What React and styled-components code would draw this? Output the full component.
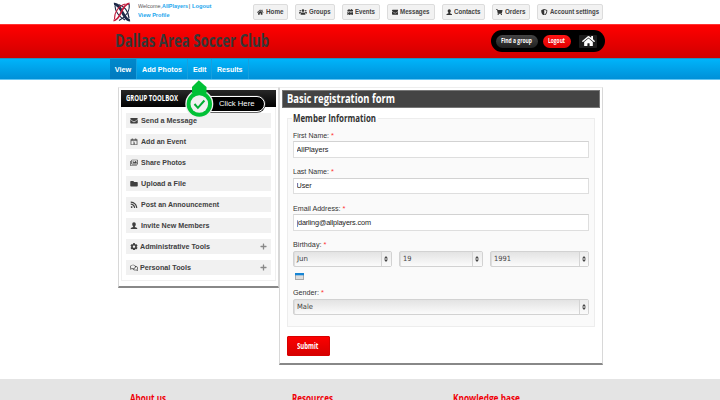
import React, { useLayoutEffect, useRef, useState } from "react";
import styled, { createGlobalStyle, css } from "styled-components";
import {
  FaHome, FaUsers, FaCalendarAlt, FaEnvelope, FaShoppingCart, FaShieldAlt,
  FaRegImages, FaFolder, FaRss, FaCog, FaRegComments, FaPlus,
} from "react-icons/fa";

const sans = '"Liberation Sans", Arial, sans-serif';
const narrow = '"Open Sans", "Noto Sans", sans-serif';

const GlobalStyle = createGlobalStyle`
  * { box-sizing: border-box; }
  html, body { margin: 0; padding: 0; overflow: hidden; background: #fff; }
  body { font-family: ${sans}; color: #3c3c3c; }
  h1, h2, h3, p { margin: 0; font-weight: inherit; font-size: inherit; }
  a { color: inherit; text-decoration: none; }
`;

/* Text condensed or widened to a set measure */
const Measure = styled.span`
  display: inline-block;
  flex: none;
  width: ${(p) => p.$w}px;
  white-space: nowrap;
  text-align: left;
`;
const Stretch = styled.span`
  display: inline-block;
  transform-origin: 0 50%;
`;
function Fit({ w, children }) {
  const ref = useRef(null);
  const [scale, setScale] = useState(1);
  useLayoutEffect(() => {
    const probe = document.createRange();
    probe.selectNodeContents(ref.current);
    ref.current.style.transform = "none";
    const natural = probe.getBoundingClientRect().width;
    if (natural) setScale(w / natural);
    ref.current.style.transform = `scaleX(${w / natural})`;
  }, [w]);
  return (
    <Measure $w={w}>
      <Stretch ref={ref} style={{ transform: `scaleX(${scale})` }}>{children}</Stretch>
    </Measure>
  );
}

const Page = styled.div`
  width: 720px;
  height: 400px;
  overflow: hidden;
  display: flex;
  flex-direction: column;
`;

const TopBar = styled.header`
  flex: none;
  height: 24px;
  padding: 0 117px 0 112px;
  display: flex;
  align-items: flex-start;
  background: #fff;
`;
const Logo = styled.svg`
  width: 20px;
  height: 20px;
  margin-top: 2px;
  flex: none;
`;
const Greeting = styled.div`
  margin: 1px 0 0 5.5px;
  font-size: 6.2px;
  line-height: 9px;
  color: #555;
  flex: 1;
`;
const GreetingLine = styled.div`
  display: flex;
  height: 9px;
`;
const BlueLink = styled.a`
  color: #1ba6ee;
  font-weight: bold;
`;
const Separator = styled.span`
  width: 4px;
  text-align: center;
`;
const QuickLinks = styled.nav`
  display: flex;
  gap: 7.5px;
  margin-top: 4px;
`;
const QuickLink = styled.a`
  width: ${(p) => p.$w}px;
  height: 16px;
  display: flex;
  align-items: center;
  justify-content: center;
  gap: 2px;
  border: 1px solid #dcdcdc;
  border-radius: 2px;
  background: #f2f2f2;
  color: #444;
  font-size: 6.8px;
  line-height: 8px;
  font-weight: bold;
  svg { width: ${(p) => p.$icon ?? 6.5}px; height: ${(p) => p.$icon ?? 6.5}px; flex: none; color: #333; }
`;

const Banner = styled.div`
  flex: none;
  height: 34px;
  padding: 0 115px;
  display: flex;
  justify-content: space-between;
  border-top: 1px solid #f33;
  background: linear-gradient(#ff0000, #d00000);
`;
const ClubName = styled.h1`
  font-family: ${narrow};
  font-size: 18px;
  line-height: 24px;
  font-weight: bold;
  color: #373737;
  margin-top: 3px;
`;
const Account = styled.div`
  width: 114px;
  height: 22px;
  margin-top: 5px;
  padding: 0 8px 0 5px;
  border-radius: 11px;
  background: #000;
  display: flex;
  align-items: center;
`;
const HomeButton = styled.a`
  width: 18px;
  height: 13px;
  margin-left: auto;
  border-radius: 1px;
  background: #1c1c1c;
  display: flex;
  align-items: center;
  justify-content: center;
  color: #fff;
  svg { width: 13px; height: 12px; }
`;
const PillButton = styled.a`
  width: ${(p) => p.$w}px;
  height: 13px;
  border-radius: 7px;
  display: flex;
  align-items: center;
  justify-content: center;
  font-family: ${narrow};
  font-weight: bold;
  font-size: 7px;
  line-height: 10px;
  color: #fff;
  ${(p) => p.$red
    ? css`background: linear-gradient(#ff1515, #e00000); margin-left: 5px;`
    : css`background: linear-gradient(#454545, #202020);`}
`;

const TabBar = styled.nav`
  flex: none;
  height: 22px;
  padding-left: 110px;
  display: flex;
  border-top: 1px solid #258fbd;
  border-bottom: 1px solid #63c5f3;
  background: linear-gradient(#00b4fa, #0090d8);
`;
const Tab = styled.a`
  width: ${(p) => p.$w}px;
  height: 20px;
  display: flex;
  align-items: center;
  justify-content: center;
  color: #fff;
  font-size: 7.3px;
  line-height: 9px;
  font-weight: bold;
  border-right: 1px solid #16a0df;
  ${(p) => p.$active && css`background: linear-gradient(#0089cc, #0079be);`}
`;

const Main = styled.main`
  flex: none;
  height: 298.5px;
  padding: 7px 0 0 117.5px;
  display: flex;
  align-items: flex-start;
`;
const Panel = styled.section`
  flex: none;
  width: ${(p) => p.$w}px;
  height: ${(p) => p.$h}px;
  padding: 2px;
  background: #fff;
  border: 1px solid #d8d8d8;
  border-top-color: #eee;
  border-bottom: 2px solid #888;
`;
const ToolHeader = styled.h2`
  height: 17px;
  padding: 0 5.5px 1px;
  display: flex;
  align-items: center;
  font-family: ${narrow};
  font-size: 8.6px;
  line-height: 12px;
  font-weight: bold;
  color: #fff;
  background: linear-gradient(#282828, #000);
`;
const ToolList = styled.div`
  height: 174px;
  padding: 6px 4.5px 0;
  display: flex;
  flex-direction: column;
  gap: 6px;
  border: 1px solid #f0f0f0;
  border-top: 0;
`;
const Tool = styled.a`
  height: 15px;
  flex: none;
  padding: 0 4px;
  display: flex;
  align-items: center;
  background: #f1f1f1;
  color: #404040;
  font-size: 7.5px;
  line-height: 9px;
  font-weight: bold;
  svg { flex: none; width: 8px; height: 7.5px; }
  > svg:first-child { margin-right: ${(p) => (p.$expandable ? 2 : 3)}px; }
  > svg:last-child { margin-left: auto; width: 7px; height: 7px; color: #888; }
`;

const FormTitle = styled.h2`
  height: 18px;
  padding: 0 4px;
  display: flex;
  align-items: center;
  border: 1px solid #777;
  background: #444;
  color: #fff;
  font-family: ${narrow};
  font-size: 12px;
  line-height: 16px;
  font-weight: bold;
`;
const Group = styled.div`
  width: 308px;
  height: 209px;
  margin: 10px 0 0 4.5px;
  padding: 0 4.5px 0 5px;
  border: 1px solid #ededed;
  background: #fafafa;
`;
const Legend = styled.h3`
  height: 14px;
  width: 86px;
  margin: -8px 0 4.5px -1px;
  padding-left: 1px;
  background: linear-gradient(#fff 57%, #fafafa 57%);
  font-family: ${narrow};
  font-size: 10.8px;
  line-height: 14px;
  font-weight: bold;
  color: #333;
`;
const Field = styled.div`
  height: ${(p) => p.$h ?? 36.5}px;
`;
const Label = styled.label`
  display: flex;
  gap: 2.5px;
  height: 11.5px;
  font-size: 7.4px;
  line-height: 12px;
  color: #333;
`;
const Required = styled.span`
  color: #f33;
`;
const Input = styled.input`
  display: block;
  width: 296.5px;
  height: 16.5px;
  padding: 0 3px;
  border: 1px solid #dedede;
  border-top-color: #d2d2d2;
  border-radius: 0;
  outline: 0;
  background: #fff;
  color: #222;
  font: 7.3px/14px ${sans};
  letter-spacing: ${(p) => p.$track ?? 0}px;
`;
const SelectRow = styled.div`
  display: flex;
  gap: 7px;
`;
const SelectBox = styled.div`
  width: ${(p) => p.$w}px;
  height: 16.5px;
  display: flex;
  justify-content: space-between;
  align-items: center;
  padding-left: 3.5px;
  border: 1px solid #d2d2d2;
  border-radius: 2px;
  background: linear-gradient(#e3e3e3, #fbfbfb);
  box-shadow: inset 1px 0 0 #dedede;
  color: #444;
  font: 7.2px/12px "DejaVu Sans", sans-serif;
`;
const Stepper = styled.span`
  width: 9.5px;
  height: 100%;
  border-left: 1px solid #d4d4d4;
  background: linear-gradient(#ececec, #fafafa);
  display: flex;
  align-items: center;
  justify-content: center;
  svg { width: 4px; height: 6px; }
`;
const CalendarIcon = styled.svg`
  display: block;
  width: 9px;
  height: 7px;
  margin: 6px 0 0 2px;
`;
const Submit = styled.button`
  display: flex;
  align-items: center;
  justify-content: center;
  width: 43px;
  height: 20px;
  margin: 8.5px 0 0 4.5px;
  padding: 0;
  border: 1px solid #d80000;
  border-radius: 1px;
  background: linear-gradient(#fc0000, #d60000);
  color: #fff;
  font: bold 8.8px/12px ${narrow};
`;

const Footer = styled.footer`
  flex: 1;
  padding: 12px 0 0 130px;
  display: flex;
  background: #e4e4e4;
  color: #f00008;
  font-family: ${narrow};
  font-size: 10.5px;
  line-height: 14px;
  font-weight: bold;
`;
const FooterColumn = styled.div`
  width: 161.7px;
  flex: none;
`;

/* Callout floating over the toolbox, pointing at the Edit tab */
const Callout = styled.div`
  position: absolute;
  left: 184px;
  top: 79px;
  width: 82px;
  height: 40px;
`;
const CalloutLabel = styled.div`
  position: absolute;
  left: 14px;
  top: 17px;
  width: 67px;
  height: 16px;
  padding-left: 19.5px;
  border: 1px solid #fff;
  border-radius: 8px;
  background: #000;
  box-shadow: 0 0 0 0.7px #333;
  color: #fff;
  font-size: 7.4px;
  line-height: 14px;
`;
const CalloutPin = styled.svg`
  position: absolute;
  left: 0;
  top: 0;
  width: 30px;
  height: 40px;
`;

function PersonIcon() {
  return (
    <svg viewBox="0 0 16 16" fill="currentColor">
      <path d="M8 .5c2.5 0 3.8 1.8 3.8 4.2 0 2-.8 3.8-1.9 4.7v1.1l4 1.6c.8.4 1.1 1.2 1.1 3.4H1c0-2.2.3-3 1.1-3.400l4-1.600V9.400C5 8.500 4.200 6.700 4.200 4.700 4.200 2.300 5.500.5 8 .5z" />
    </svg>
  );
}

function EventIcon() {
  return (
    <svg viewBox="0 0 16 16" fill="none" stroke="currentColor" strokeWidth="1.5">
      <path d="M1.5 3h13v11.5h-13zM1.5 5.500h13M4.500 1v3M11.500 1v3M6.500 8.500H8.300v4.500M6.300 12.800h4" />
    </svg>
  );
}

const quickLinks = [
  ["Home", FaHome, 34.5, 17.5],
  ["Groups", FaUsers, 39.5, 21.5, 8],
  ["Events", FaCalendarAlt, 37.5, 20],
  ["Messages", FaEnvelope, 47.5, 29.5],
  ["Contacts", PersonIcon, 42.5, 26.5],
  ["Orders", FaShoppingCart, 37.5, 20.5],
  ["Account settings", FaShieldAlt, 66, 49],
];

const tools = [
  ["Send a Message", FaEnvelope, 56],
  ["Add an Event", EventIcon, 45],
  ["Share Photos", FaRegImages, 45],
  ["Upload a File", FaFolder, 45],
  ["Post an Announcement", FaRss, 78],
  ["Invite New Members", PersonIcon, 68.5],
  ["Administrative Tools", FaCog, 70, true],
  ["Personal Tools", FaRegComments, 51, true],
];

function Select({ value, w, textWidth }) {
  return (
    <SelectBox $w={w}>
      <Fit w={textWidth}>{value}</Fit>
      <Stepper>
        <svg viewBox="0 0 4 6" fill="#444"><path d="M2 0 4 2.5H0zM2 6 0 3.5h4z" /></svg>
      </Stepper>
    </SelectBox>
  );
}

function FieldLabel({ text, w }) {
  return <Label><Fit w={w}>{text}</Fit><Required>*</Required></Label>;
}

export default function App() {
  return (
    <Page>
      <GlobalStyle />
      <TopBar>
        <Logo viewBox="0 0 20 20" fill="none">
          <path d="M2 2.2C6 1.5 8.5 7 11 11.5S15.5 18.5 18 18" stroke="#1c2948" strokeWidth="2.8" />
          <path d="M3 4C3 9 7 15 13 18" stroke="#1c2948" strokeWidth="1.1" />
          <path d="M6.5 2.5C12 4 16.5 9 17 16" stroke="#1c2948" strokeWidth="1.2" />
          <path d="M17.5 1.5C13 1.5 10.5 7 8.5 11.5S5 18.5 1.5 18.5" stroke="#c21d3e" strokeWidth="1.8" />
          <path d="M17 2C18.5 8 14 15 7 18.5" stroke="#1c2948" strokeWidth="1.1" />
          <path d="M13.5 2C7 3.5 2.5 9.5 2.5 17" stroke="#c21d3e" strokeWidth="1.1" />
        </Logo>
        <Greeting>
          <GreetingLine>
            <Fit w={24}>Welcome,</Fit>
            <BlueLink><Fit w={26}>AllPlayers</Fit></BlueLink>
            <Separator>|</Separator>
            <BlueLink><Fit w={19.5}>Logout</Fit></BlueLink>
          </GreetingLine>
          <GreetingLine><BlueLink><Fit w={31.5}>View Profile</Fit></BlueLink></GreetingLine>
        </Greeting>
        <QuickLinks>
          {quickLinks.map(([text, Icon, w, tw, icon]) => (
            <QuickLink key={text} $w={w} $icon={icon}><Icon /><Fit w={tw}>{text}</Fit></QuickLink>
          ))}
        </QuickLinks>
      </TopBar>

      <Banner>
        <ClubName><Fit w={154}>Dallas Area Soccer Club</Fit></ClubName>
        <Account>
          <PillButton $w={41.5}><Fit w={31}>Find a group</Fit></PillButton>
          <PillButton $w={28} $red><Fit w={17}>Logout</Fit></PillButton>
          <HomeButton><FaHome /></HomeButton>
        </Account>
      </Banner>

      <TabBar>
        <Tab $w={27} $active><Fit w={16.5}>View</Fit></Tab>
        <Tab $w={51}><Fit w={40}>Add Photos</Fit></Tab>
        <Tab $w={24}><Fit w={13.5}>Edit</Fit></Tab>
        <Tab $w={37}><Fit w={25.5}>Results</Fit></Tab>
      </TabBar>

      <Main>
        <Panel $w={161.5} $h={200.5}>
          <ToolHeader><Fit w={52}>GROUP TOOLBOX</Fit></ToolHeader>
          <ToolList>
            {tools.map(([text, Icon, w, expandable]) => (
              <Tool key={text} $expandable={expandable}>
                <Icon /><Fit w={w}>{text}</Fit>{expandable && <FaPlus />}
              </Tool>
            ))}
          </ToolList>
        </Panel>

        <Panel $w={324} $h={277.5}>
          <FormTitle><Fit w={108}>Basic registration form</Fit></FormTitle>
          <Group>
            <Legend><Fit w={83}>Member Information</Fit></Legend>
            <Field>
              <FieldLabel text="First Name:" w={36} />
              <Input defaultValue="AllPlayers" $track={-0.05} />
            </Field>
            <Field>
              <FieldLabel text="Last Name:" w={36} />
              <Input defaultValue="User" $track={-0.05} />
            </Field>
            <Field>
              <FieldLabel text="Email Address:" w={47.5} />
              <Input defaultValue="jdarling@allplayers.com" $track={-0.14} />
            </Field>
            <Field $h={48}>
              <FieldLabel text="Birthday:" w={28.5} />
              <SelectRow>
                <Select value="Jun" w={99} textWidth={11} />
                <Select value="19" w={84} textWidth={8.5} />
                <Select value="1991" w={99.5} textWidth={17} />
              </SelectRow>
              <CalendarIcon viewBox="0 0 9 7">
                <rect x=".5" y=".5" width="8" height="6" fill="#ddd" stroke="#aaa" />
                <rect width="9" height="2.3" fill="#1685d5" />
              </CalendarIcon>
            </Field>
            <Field>
              <FieldLabel text="Gender:" w={26} />
              <Select value="Male" w={296.5} textWidth={16} />
            </Field>
          </Group>
          <Submit type="button"><Fit w={21.5}>Submit</Fit></Submit>
        </Panel>
      </Main>

      <Footer>
        <FooterColumn><Fit w={36}>About us</Fit></FooterColumn>
        <FooterColumn><Fit w={41}>Resources</Fit></FooterColumn>
        <FooterColumn><Fit w={67}>Knowledge base</Fit></FooterColumn>
      </Footer>

      <Callout>
        <CalloutLabel><Fit w={35.5}>Click Here</Fit></CalloutLabel>
        <CalloutPin viewBox="0 0 30 40">
          <circle cx="15.3" cy="25" r="14" fill="#eee" />
          <path d="M14.8 1.2 8 8v6h14.5V8z" fill="#00c136" />
          <circle cx="15.3" cy="25" r="12.7" fill="#00c136" />
          <circle cx="15.3" cy="25" r="8.8" fill="#f0f0f0" />
          <path d="m10.5 25 3.4 3.8 6.5-7.3" fill="none" stroke="#00ad32" strokeWidth="2" />
        </CalloutPin>
      </Callout>
    </Page>
  );
}
